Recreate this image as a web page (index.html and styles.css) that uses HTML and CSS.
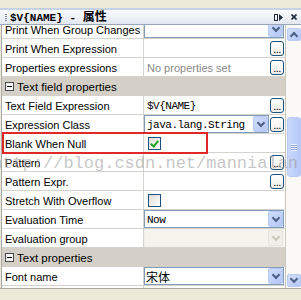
FILE: index.html
```html
<!DOCTYPE html>
<html lang="zh">
  <head>
    <meta charset="utf-8" />
    <title>$V{NAME} - 属性</title>
    <link rel="stylesheet" href="styles.css">
  </head>
  <body>
    <div class="pane">
      <div class="top-strip"></div>

      <div class="titlebar">
        <span class="grip"></span>
        <span class="title">$V{NAME} - <span class="cjk">属性</span></span>
        <span class="tools">
          <svg width="9" height="7" viewBox="0 0 9 7">
            <rect x="0.5" y="0.5" width="3" height="6" fill="none" stroke="#1f2a3a" />
            <path d="M5 0 L9 3.5 L5 7 Z" fill="#1f2a3a" />
          </svg>
          <svg width="6" height="6" viewBox="0 0 6 6">
            <path d="M0.5 0.5 L5.5 5.5 M5.5 0.5 L0.5 5.5" stroke="#1f2a3a" stroke-width="1.6" />
          </svg>
        </span>
      </div>

      <div class="content">
        <div class="sheet">
          <div class="rows">
            <div class="row">
              <div class="label">Print When Group Changes</div>
              <div class="value">
                <div class="combo"><span class="arrow"></span></div>
              </div>
            </div>
            <div class="row">
              <div class="label">Print When Expression</div>
              <div class="value"><span class="dots">...</span></div>
            </div>
            <div class="row">
              <div class="label">Properties expressions</div>
              <div class="value">
                <span class="hint">No properties set</span>
                <span class="dots">...</span>
              </div>
            </div>

            <div class="row section"><span class="minus"></span>Text field properties</div>

            <div class="row">
              <div class="label">Text Field Expression</div>
              <div class="value">
                <span class="code">$V{NAME}</span>
                <span class="dots">...</span>
              </div>
            </div>
            <div class="row">
              <div class="label">Expression Class</div>
              <div class="value">
                <div class="combo"><span class="code">java.lang.String</span><span class="arrow"></span></div>
                <span class="dots">...</span>
              </div>
            </div>
            <div class="row">
              <div class="label">Blank When Null</div>
              <div class="value"><span class="check checked"></span></div>
            </div>
            <div class="row">
              <div class="label">Pattern</div>
              <div class="value"><span class="dots">...</span></div>
            </div>
            <div class="row">
              <div class="label">Pattern Expr.</div>
              <div class="value"><span class="dots">...</span></div>
            </div>
            <div class="row">
              <div class="label">Stretch With Overflow</div>
              <div class="value"><span class="check"></span></div>
            </div>
            <div class="row">
              <div class="label">Evaluation Time</div>
              <div class="value">
                <div class="combo"><span class="code">Now</span><span class="arrow"></span></div>
              </div>
            </div>
            <div class="row">
              <div class="label">Evaluation group</div>
              <div class="value">
                <div class="combo disabled"><span class="arrow"></span></div>
              </div>
            </div>

            <div class="row section"><span class="minus"></span>Text properties</div>

            <div class="row">
              <div class="label">Font name</div>
              <div class="value">
                <div class="combo"><span class="font-name">宋体</span><span class="arrow"></span></div>
              </div>
            </div>
            <div class="row">
              <div class="label"></div>
              <div class="value"></div>
            </div>
          </div>
        </div>

        <div class="vscroll">
          <span class="sbtn up"></span>
          <span class="thumb"></span>
          <span class="sbtn down"></span>
        </div>
      </div>

      <div class="watermark">http://blog.csdn.net/mannialan</div>
      <div class="mark"></div>
    </div>
  </body>
</html>
```

FILE: styles.css
```css
* {
  box-sizing: border-box;
}

body {
  margin: 0;
  background: #ece9d8;
  font-family: "Liberation Sans", Arial, sans-serif;
  font-size: 11px;
  color: #000;
}

.pane {
  position: relative;
  width: 301px;
  height: 300px;
  overflow: hidden;
}

.top-strip {
  height: 10px;
  border-bottom: 2px solid #c4d1e6;
}

.titlebar {
  height: 15px;
  display: flex;
  align-items: center;
  background: linear-gradient(#fbfcfe, #e2e7f0);
  border-bottom: 1px solid #9aa6ba;
}

.grip {
  width: 2px;
  height: 7px;
  margin: 0 3px 0 5px;
  background: repeating-linear-gradient(#7d8697 0 1px, transparent 1px 2px);
}

.title {
  font: bold 11px "Liberation Mono", "Noto Sans CJK SC", monospace;
  line-height: 14px;
  white-space: pre;
}

.title .cjk {
  font-family: "Noto Sans CJK SC", sans-serif;
  font-size: 12px;
}

.tools {
  margin-left: auto;
  margin-right: 4px;
  display: flex;
  align-items: center;
  gap: 8px;
}

.content {
  display: flex;
  height: 264px;
  border-bottom: 1px solid #a9a89f;
}

.sheet {
  width: 285px;
  margin-left: 1px;
  border-left: 1px solid #a7a7a7;
  border-right: 1px solid #c9c6bd;
  background: #fff;
  overflow: hidden;
}

.rows {
  margin-top: -5px;
}

.row {
  display: flex;
  height: 19px;
  border-bottom: 1px solid #d6d3ce;
}

.label {
  width: 142px;
  padding: 1px 0 0 3px;
  border-right: 1px solid #d6d3ce;
  line-height: 18px;
  white-space: nowrap;
}

.value {
  flex: 1;
  display: flex;
  align-items: center;
  padding-right: 1px;
  min-width: 0;
}

.section {
  background: #d4d0c8;
  border-bottom-color: #d4d0c8;
  align-items: center;
  padding: 1px 0 0 3px;
  font-size: 11.5px;
}

.minus {
  position: relative;
  width: 9px;
  height: 9px;
  margin-right: 3px;
  border: 1px solid #4a4a4a;
  background: #f4f4f2;
}

.minus::after {
  content: "";
  position: absolute;
  left: 1px;
  top: 3px;
  width: 5px;
  height: 1px;
  background: #000;
}

.hint {
  padding: 1px 0 0 3px;
  color: #8a8a8a;
  white-space: nowrap;
}

.code {
  padding: 1px 0 0 2px;
  font-family: "Liberation Mono", monospace;
  font-size: 11px;
  letter-spacing: -0.5px;
  white-space: nowrap;
}

.value > .code {
  padding-left: 3px;
}

.font-name {
  padding-left: 1px;
  font-family: "Noto Sans CJK SC", sans-serif;
  font-size: 12px;
}

.dots {
  margin-left: auto;
  width: 14px;
  height: 15px;
  border: 1px solid #1c5180;
  border-radius: 3px;
  background: linear-gradient(#fff, #eeede8);
  display: flex;
  align-items: flex-end;
  justify-content: center;
  font-size: 11px;
  line-height: 11px;
  letter-spacing: -0.5px;
}

.combo + .dots {
  margin-left: 1px;
}

.combo {
  flex: 1;
  height: 18px;
  display: flex;
  align-items: center;
  border: 1px solid #7f9db9;
  background: #fff;
  min-width: 0;
}

.arrow {
  margin-left: auto;
  width: 15px;
  height: 16px;
  border: 1px solid #b9cbf5;
  border-radius: 2px;
  background: linear-gradient(135deg, #cfdcfd, #b4c7f5);
  position: relative;
}

.arrow::after {
  content: "";
  position: absolute;
  left: 4px;
  top: 3px;
  width: 4px;
  height: 4px;
  border-right: 2px solid #4d6185;
  border-bottom: 2px solid #4d6185;
  transform: rotate(45deg);
}

.combo.disabled {
  border-color: #f0efe8;
  background: #f4f3ec;
}

.combo.disabled .arrow {
  border-color: #e6e4dc;
  background: #f0efea;
}

.combo.disabled .arrow::after {
  border-color: #c9c7ba;
}

.check {
  position: relative;
  margin-left: 4px;
  width: 13px;
  height: 13px;
  border: 1px solid #1c5180;
  background: linear-gradient(135deg, #dcdcd7, #fff);
}

.check.checked::after {
  content: "";
  position: absolute;
  left: 3px;
  top: 1px;
  width: 3px;
  height: 6px;
  border-right: 2px solid #21a121;
  border-bottom: 2px solid #21a121;
  transform: rotate(40deg);
}

.vscroll {
  width: 15px;
  display: flex;
  flex-direction: column;
  padding: 3px 0 1px 1px;
  background: #faf9f5;
}

.sbtn,
.thumb {
  width: 14px;
  border: 1px solid #b9cbf5;
  border-radius: 2px;
  background: linear-gradient(135deg, #d2defd, #b4c7f5);
  position: relative;
}

.sbtn {
  height: 13px;
}

.sbtn::after {
  content: "";
  position: absolute;
  left: 3px;
  width: 4px;
  height: 4px;
  border-right: 2px solid #4d6185;
  border-bottom: 2px solid #4d6185;
}

.sbtn.up::after {
  top: 4px;
  transform: rotate(-135deg);
}

.sbtn.down::after {
  top: 1px;
  transform: rotate(45deg);
}

.thumb {
  height: 60px;
  margin-top: 76px;
  border-radius: 3px;
  background:
    repeating-linear-gradient(#eef3ff 0 1px, #8ea6dc 1px 2px) center / 6px 7px no-repeat,
    linear-gradient(90deg, #cad8fc, #b5c8f6);
}

.sbtn.down {
  margin-top: auto;
}

.watermark {
  position: absolute;
  left: -8px;
  top: 155px;
  font-family: "Liberation Mono", monospace;
  font-size: 17px;
  line-height: 17px;
  color: rgba(150, 150, 150, 0.55);
  white-space: nowrap;
  pointer-events: none;
}

.mark {
  position: absolute;
  left: 2px;
  top: 132px;
  width: 206px;
  height: 22px;
  border: 2px solid #e02828;
  pointer-events: none;
}
```
